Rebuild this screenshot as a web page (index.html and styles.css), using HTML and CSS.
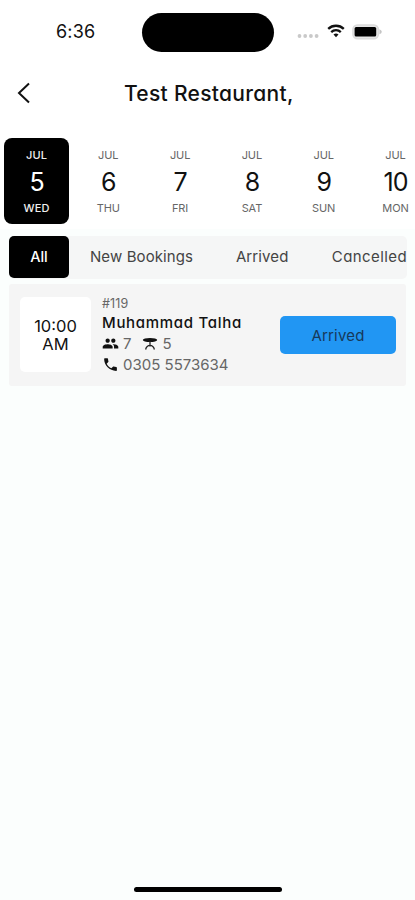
FILE: index.html
```html
<!DOCTYPE html>
<html lang="en">
<head>
<meta charset="utf-8">
<meta name="viewport" content="width=device-width, initial-scale=1">
<title>Test Restaurant</title>
<link rel="stylesheet" href="styles.css">
</head>
<body>
<div class="screen">
  <header class="top">
    <div class="status">
      <span class="clock">6:36</span>
      <span class="island"></span>
      <span class="indicators">
        <svg class="dots" width="22" height="6" viewBox="0 0 22 6" fill="#c9c9c9"><circle cx="2.5" cy="3" r="1.9"/><circle cx="8.2" cy="3" r="1.9"/><circle cx="13.9" cy="3" r="1.9"/><circle cx="19.6" cy="3" r="1.9"/></svg>
        <svg class="wifi" width="18" height="14" viewBox="0 0 18 14" fill="none" stroke="#111" stroke-width="2.3"><path d="M1.2 4.9a11.2 11.2 0 0 1 15.6 0"/><path d="M4.2 8.1a6.9 6.9 0 0 1 9.6 0"/><path d="M9 13.2 6.5 10.6a3.6 3.6 0 0 1 5 0z" fill="#111" stroke="none"/></svg>
        <svg class="battery" width="31" height="16" viewBox="0 0 31 16"><rect x=".9" y=".9" width="25.500" height="13.800" rx="4.5" fill="#e6e6e6" stroke="#dcdcdc" stroke-width="1.500"/><rect x="2.600" y="3" width="21.600" height="9.600" rx="1.500" fill="#000"/><path d="M27.500 5.300v5q2.300-1 2.300-2.500t-2.300-2.500z" fill="#c4c4c4"/></svg>
      </span>
    </div>
    <div class="titlebar">
      <svg class="back" width="14" height="22" viewBox="0 0 14 22" fill="none" stroke="#111" stroke-width="2"><path d="M12 1.5 2 11l10 9.5"/></svg>
      <h1>Test Restaurant,</h1>
    </div>
    <div class="dates">
      <div class="date active"><span>JUL</span><b>5</b><span>WED</span></div>
      <div class="date"><span>JUL</span><b>6</b><span>THU</span></div>
      <div class="date"><span>JUL</span><b>7</b><span>FRI</span></div>
      <div class="date"><span>JUL</span><b>8</b><span>SAT</span></div>
      <div class="date"><span>JUL</span><b>9</b><span>SUN</span></div>
      <div class="date"><span>JUL</span><b>10</b><span>MON</span></div>
    </div>
  </header>
  <nav class="tabs">
    <span class="tab selected">All</span>
    <span class="tab bookings">New Bookings</span>
    <span class="tab arrived">Arrived</span>
    <span class="tab cancelled">Cancelled</span>
  </nav>
  <article class="card">
    <div class="time">10:00<br>AM</div>
    <div class="info">
      <span class="number">#119</span>
      <span class="name">Muhammad Talha</span>
      <span class="line">
        <svg class="people" width="17" height="17" viewBox="0 0 24 24" fill="#111"><path d="M16 11c1.66 0 2.99-1.34 2.99-3S17.66 5 16 5s-3 1.340-3 3 1.340 3 3 3zm-8 0c1.660 0 2.990-1.340 2.990-3S9.660 5 8 5 5 6.340 5 8s1.340 3 3 3zm0 2c-2.330 0-7 1.170-7 3.500V19h14v-2.500c0-2.330-4.670-3.500-7-3.500zm8 0c-.29 0-.62.020-.97.050 1.160.84 1.970 1.970 1.970 3.450V19h6v-2.500c0-2.330-4.670-3.500-7-3.500z"/></svg>
        <span class="guests">7</span>
        <svg class="table" width="16" height="14" viewBox="0 0 16 14" fill="none" stroke="#222"><ellipse cx="8" cy="3" rx="7.2" ry="2" fill="#111" stroke="none"/><path d="M8 4v5.500M3.600 12.500c.7-2.700 2.300-4.100 4.400-4.100s3.700 1.400 4.400 4.100" stroke-width="1.300"/></svg>
        <span>5</span>
      </span>
      <span class="line">
        <svg class="phone" width="17" height="17" viewBox="0 0 24 24" fill="#111"><path d="M6.620 10.790c1.440 2.830 3.760 5.140 6.590 6.590l2.200-2.200c.27-.27.67-.36 1.020-.24 1.120.37 2.330.57 3.570.57.55 0 1 .45 1 1V20c0 .55-.45 1-1 1-9.390 0-17-7.610-17-17 0-.55.45-1 1-1h3.500c.55 0 1 .45 1 1 0 1.250.2 2.450.57 3.570.11.35.03.74-.25 1.020l-2.200 2.200z"/></svg>
        <span class="tel">0305 5573634</span>
      </span>
    </div>
    <button class="action" type="button">Arrived</button>
  </article>
  <div class="home"></div>
</div>
</body>
</html>
```
FILE: styles.css
```css
* { box-sizing: border-box; }
body {
  margin: 0;
  background: #fbfefd;
  color: #111;
  font-family: Inter, "Noto Sans", sans-serif;
  font-feature-settings: "cv11" 1;
}
.screen { width: 415px; height: 900px; overflow: hidden; display: flex; flex-direction: column; }
.top { background: #fff; height: 229px; flex: none; }
.status { height: 64px; display: flex; align-items: center; }
.clock { width: 142px; padding-left: 56px; font-size: 18px; line-height: 20px; font-weight: 400; letter-spacing: .2px; }
.island { width: 132px; height: 39px; border-radius: 20px; background: #000; }
.indicators { display: flex; align-items: center; margin-left: 23px; }
.dots { margin-top: 8px; }
.wifi { margin-left: 8px; margin-top: -2px; }
.battery { margin-left: 7px; margin-top: -1px; }
.titlebar { height: 58px; display: flex; align-items: center; padding-left: 17px; }
h1 { margin: 2px 0 0 93px; font-size: 21px; line-height: 28px; font-weight: 500; letter-spacing: .3px; white-space: nowrap; }
.dates { display: flex; gap: 6.8px; padding: 16px 0 0 4px; }
.date {
  flex: none; width: 65px; height: 86px; border-radius: 8px;
  display: flex; flex-direction: column; align-items: center; padding-top: 10px;
  color: #666; font-size: 11px; line-height: 15px; letter-spacing: -.1px;
}
.date b { color: #111; font-size: 25px; line-height: 30px; font-weight: 400; margin: 4px 0; letter-spacing: -1px; }
.date.active { background: #000; color: #eee; font-weight: 500; letter-spacing: .1px; }
.date.active b { color: #fff; }
.tabs {
  flex: none; display: flex; align-items: center; width: 398px; height: 43px;
  margin: 7px 0 0 9px; background: #f5f6f6; border-radius: 5px;
  font-size: 15px; line-height: 20px; color: #444; white-space: nowrap;
}
.tab { margin-bottom: 2px; }
.tab.selected {
  width: 60px; height: 42px; line-height: 42px; align-self: flex-start; margin: 0;
  text-align: center; background: #000; color: #fff; border-radius: 5px; font-weight: 500; font-size: 14.500px;
}
.bookings { margin-left: 21px; width: 146px; letter-spacing: .1px; }
.arrived { width: 96px; letter-spacing: .1px; }
.cancelled { letter-spacing: .4px; }
.card {
  flex: none; display: flex; width: 397px; height: 102px; margin: 5px 0 0 9px;
  padding: 13px 10px 0 11px; background: #f5f5f5; border-radius: 3px;
}
.time {
  width: 71px; height: 75px; border-radius: 5px; background: #fff;
  padding-top: 20px; text-align: center;
  font-size: 16.500px; line-height: 18px; font-weight: 400;
}
.info { margin: -4px 0 0 11px; width: 178px; display: flex; flex-direction: column; white-space: nowrap; }
.number { font-size: 12.500px; line-height: 20px; padding-top: 1px; margin-bottom: -1px; color: #666; letter-spacing: .1px; }
.name { font-size: 15px; line-height: 20px; font-weight: 500; letter-spacing: .7px; }
.line { display: flex; align-items: center; height: 21px; font-size: 15px; color: #666; }
.guests { margin: 0 10px 0 4px; }
.table { margin-right: 5px; }
.phone { margin-right: 4px; }
.action {
  width: 116px; height: 38px; margin-top: 19px; padding: 0; border: 0; border-radius: 5px;
  background: #2196f3; color: #17395a; font: inherit; font-size: 15px; letter-spacing: .2px;
  font-feature-settings: inherit;
}
.home { width: 148px; height: 5px; border-radius: 3px; background: #000; margin: auto auto 8px 134px; flex: none; }
```
